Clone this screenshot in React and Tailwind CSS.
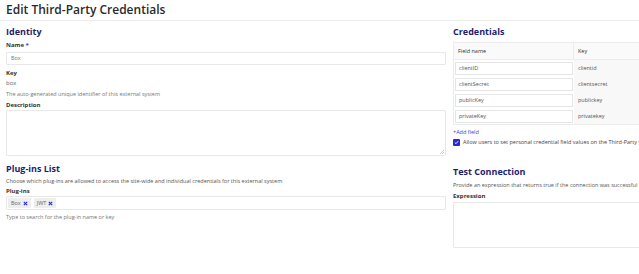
export default function App() {
  const rows = [
    ["clientID", "clientid"],
    ["clientSecret", "clientsecret"],
    ["publicKey", "publickey"],
    ["privateKey", "privatekey"],
  ];
  return (
    <div className="w-[639px] h-[274px] overflow-hidden bg-white text-[#333] font-['Open_Sans',sans-serif]">
      <div className="w-[900px]">
        <div className="h-[21px] border-b border-[#ececec] pl-[6px] pt-[1px]">
          <h1 className="text-[12px] leading-[17px] font-semibold text-[#2a2a2a]">Edit Third-Party Credentials</h1>
        </div>
        <div className="flex pt-[4px]">
          {/* Left column */}
          <div className="w-[440px] ml-[6px]">
            <h2 className="text-[9px] leading-[13px] font-bold text-[#1e1e6e]">Identity</h2>
            <div className="mt-[3px] text-[6px] leading-[8px] font-bold text-[#333]">
              Name <span className="text-[#3b3bd6]">*</span>
            </div>
            <div className="mt-[3px] h-[13px] border border-[#e8e8e8] rounded-[1px] flex items-center px-[4px] text-[5.5px] text-[#777]">Box</div>
            <div className="mt-[4px] text-[6px] leading-[8px] font-bold text-[#333]">Key</div>
            <div className="mt-[2px] text-[6px] leading-[8px] text-[#666]">box</div>
            <div className="mt-[3px] text-[5.5px] leading-[8px] text-[#777]">The auto-generated unique identifier of this external system</div>
            <div className="mt-[3px] text-[6px] leading-[8px] font-bold text-[#333]">Description</div>
            <div className="relative mt-[1px] h-[46px] border border-[#e8e8e8] rounded-[1px]">
              <svg className="absolute right-[1px] bottom-[1px]" width="4" height="4" viewBox="0 0 4 4">
                <path d="M4 0 L0 4 M4 2 L2 4" stroke="#aaa" strokeWidth="0.6" />
              </svg>
            </div>
            <h2 className="mt-[6px] text-[9px] leading-[13px] font-bold text-[#1e1e6e]">Plug-ins List</h2>
            <div className="mt-[2px] text-[5.5px] leading-[8px] text-[#555]">Choose which plug-ins are allowed to access the site-wide and individual credentials for this external system</div>
            <div className="mt-[2px] text-[6px] leading-[8px] font-bold text-[#333]">Plug-ins</div>
            <div className="mt-[1px] h-[14px] border border-[#e8e8e8] rounded-[1px] flex items-center gap-[3px] px-[1px]">
              {["Box", "JWT"].map((t) => (
                <span key={t} className="h-[10px] bg-[#eeeeee] rounded-[1px] flex items-center gap-[2px] px-[3px] text-[5.5px] text-[#666]">
                  {t}
                  <svg width="5" height="5" viewBox="0 0 5 5">
                    <path d="M0.8 0.8 L4.2 4.2 M4.2 0.8 L0.8 4.2" stroke="#2b2bd0" strokeWidth="1.1" />
                  </svg>
                </span>
              ))}
            </div>
            <div className="mt-[3px] text-[5.5px] leading-[8px] text-[#777]">Type to search for the plug-in name or key</div>
          </div>

          {/* Right column */}
          <div className="w-[400px] ml-[7px]">
            <h2 className="text-[9px] leading-[13px] font-bold text-[#1e1e6e]">Credentials</h2>
            <div className="mt-[4px] w-[300px] border border-[#ececec]">
              <div className="flex h-[17px] bg-[#fafafa] text-[5.5px] text-[#333] border-b border-[#ececec]">
                <div className="w-[120px] flex items-center pl-[4px] border-r border-[#ececec]">Field name</div>
                <div className="flex-1 flex items-center pl-[4px]">Key</div>
              </div>
              {rows.map(([f, k]) => (
                <div key={f} className="flex h-[16px] text-[5.5px] text-[#555]">
                  <div className="w-[120px] py-[1.5px] pl-[1px] pr-[1px]">
                    <div className="h-[13px] border border-[#e6e6e6] bg-white flex items-center pl-[3px]">{f}</div>
                  </div>
                  <div className="flex-1 flex items-center pl-[4px] bg-[#f8f8f8]">{k}</div>
                </div>
              ))}
            </div>
            <div className="mt-[3px] text-[5.5px] leading-[8px] text-[#3b3bd6]">+Add field</div>
            <div className="mt-[2px] flex items-center gap-[3px] text-[5.5px] leading-[8px] text-[#444] whitespace-nowrap">
              <span className="w-[7px] h-[7px] bg-[#2a2ad4] rounded-[1px] flex items-center justify-center">
                <svg width="5" height="5" viewBox="0 0 5 5">
                  <path d="M0.9 2.6 L2 3.7 L4.2 1.2" stroke="white" strokeWidth="0.9" fill="none" />
                </svg>
              </span>
              Allow users to set personal credential field values on the Third-Party Credentials page
            </div>
            <h2 className="mt-[19px] text-[9px] leading-[13px] font-bold text-[#1e1e6e]">Test Connection</h2>
            <div className="mt-[3px] text-[5.5px] leading-[8px] text-[#555] whitespace-nowrap">Provide an expression that returns true if the connection was successful</div>
            <div className="mt-[3px] text-[6px] leading-[8px] font-bold text-[#333]">Expression</div>
            <div className="mt-[2px] h-[46px] border border-[#e8e8e8] rounded-[1px]"></div>
          </div>
        </div>
      </div>
    </div>
  );
}
